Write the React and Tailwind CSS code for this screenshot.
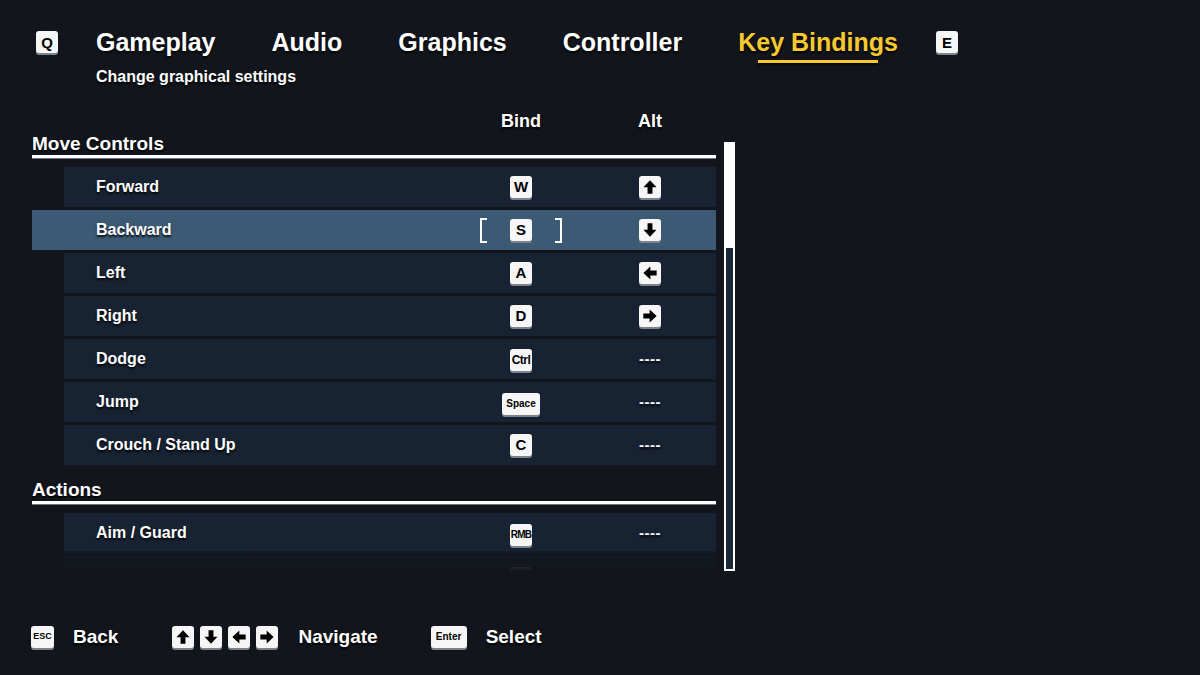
import React from 'react';

const TABS = ['Gameplay', 'Audio', 'Graphics', 'Controller', 'Key Bindings'];

const SECTIONS = [
  {
    title: 'Move Controls',
    rows: [
      { label: 'Forward', bind: 'W', alt: 'up' },
      { label: 'Backward', bind: 'S', alt: 'down', selected: true },
      { label: 'Left', bind: 'A', alt: 'left' },
      { label: 'Right', bind: 'D', alt: 'right' },
      { label: 'Dodge', bind: 'Ctrl', small: 'text-[12px] tracking-[-0.5px]' },
      { label: 'Jump', bind: 'Space', small: 'text-[10px] px-[4px]' },
      { label: 'Crouch / Stand Up', bind: 'C' },
    ],
  },
  {
    title: 'Actions',
    rows: [
      { label: 'Aim / Guard', bind: 'RMB', small: 'text-[10px] tracking-[-0.8px]' },
      { label: 'Attack', bind: 'LMB', small: 'text-[10px] tracking-[-0.8px]' },
    ],
  },
];

const ROT = { up: '', right: 'rotate-90', down: 'rotate-180', left: '-rotate-90' };

const shadow = '[text-shadow:0_2px_2px_rgba(0,0,0,0.85)]';

function Arrow({ dir }) {
  return (
    <svg width="14" height="14" viewBox="0 0 12 12" className={ROT[dir]}>
      <path d="M6 0.3 L11.6 6.3 H8.1 V11.7 H3.9 V6.3 H0.4 Z" fill="#000" />
    </svg>
  );
}

function Key({ children, className = 'text-[15px]' }) {
  return (
    <span
      className={`inline-flex items-center justify-center h-[22px] min-w-[22px] rounded-[3px] bg-[#f6f6f6] text-black font-bold leading-none shadow-[0_2px_0_#7d838b] [text-shadow:none] ${className}`}
    >
      {children}
    </span>
  );
}

function Bracket({ right }) {
  return (
    <span
      className={`block w-[7px] h-[25px] border-white border-y-2 ${right ? 'border-r-2' : 'border-l-2'}`}
    />
  );
}

function Row({ row }) {
  return (
    <div
      className={`flex items-center h-[40px] ${
        row.selected ? 'bg-[#3d5a75] pl-16' : 'bg-[#172232] ml-8 pl-8'
      }`}
    >
      <span className={`flex-1 text-[16px] font-bold text-white ${shadow}`}>{row.label}</span>
      <div className="w-[100px] flex items-center justify-center">
        {row.selected && <Bracket />}
        <span className={row.selected ? 'mx-[23px]' : ''}>
          <Key className={row.small || 'text-[15px]'}>{row.bind}</Key>
        </span>
        {row.selected && <Bracket right />}
      </div>
      <div className="w-[39px]" />
      <div className="w-[80px] flex items-center justify-center">
        {row.alt ? (
          <Key>
            <Arrow dir={row.alt} />
          </Key>
        ) : (
          <span className={`text-[15px] font-bold text-white tracking-[0.5px] ${shadow}`}>----</span>
        )}
      </div>
      <div className="w-[26px]" />
    </div>
  );
}

export default function App() {
  return (
    <div
      className="w-[1200px] h-[675px] bg-[#12151b] text-white overflow-hidden flex flex-col"
      style={{ fontFamily: '"Liberation Sans", Arial, sans-serif' }}
    >
      {/* tabs */}
      <div className="flex items-center pt-[27px] pl-[36px] gap-[38px]">
        <Key className="text-[15px] pt-[1px]">Q</Key>
        <div className="flex items-center gap-[56px]">
          {TABS.map((t) => {
            const active = t === 'Key Bindings';
            return (
              <div key={t} className="relative">
                <span
                  className={`block text-[25px] leading-[30px] font-bold ${shadow} ${
                    active ? 'text-[#f8c92f]' : 'text-white'
                  }`}
                >
                  {t}
                </span>
                {active && (
                  <span className="absolute left-[20px] right-[20px] top-[33px] h-[3px] bg-[#f8c92f] shadow-[0_2px_2px_rgba(0,0,0,0.8)]" />
                )}
              </div>
            );
          })}
        </div>
        <Key className="text-[15px] pt-[1px]">E</Key>
      </div>
      <p className={`pl-[96px] mt-[10px] text-[16px] leading-[20px] font-bold ${shadow}`}>
        Change graphical settings
      </p>

      {/* column headers */}
      <div className="flex mt-[23px] pl-[32px] w-[716px] h-[22px] items-center">
        <div className="flex-1" />
        <span className={`w-[100px] text-center text-[18px] font-bold ${shadow}`}>Bind</span>
        <div className="w-[39px]" />
        <span className={`w-[80px] text-center text-[18px] font-bold ${shadow}`}>Alt</span>
        <div className="w-[26px]" />
      </div>

      <div className="flex pl-[32px] gap-[8px]">
        <div className="relative w-[684px] h-[439px] overflow-hidden">
          {SECTIONS.map((s, i) => (
            <div key={s.title} className={i > 0 ? 'mt-[13px]' : ''}>
              <h2 className={`text-[19px] leading-[23px] font-bold ${shadow}`}>{s.title}</h2>
              <div className="h-[3px] bg-white shadow-[0_1px_0_#6b7280]" />
              <div className="mt-[9px] flex flex-col gap-[3px]">
                {s.rows.map((r) => (
                  <Row key={r.label} row={r} />
                ))}
              </div>
            </div>
          ))}
          <div className="absolute left-0 right-0 bottom-0 h-[20px] bg-gradient-to-b from-[#12151b]/60 to-[#12151b]" />
        </div>

        {/* scrollbar */}
        <div className="mt-[10px] w-[11px] h-[429px] border-2 border-white bg-[#1a2738]">
          <div className="h-[104px] bg-white" />
        </div>
      </div>

      {/* footer hints */}
      <div className={`mt-auto mb-[24px] flex items-center pl-[31px] text-[19px] font-bold ${shadow}`}>
        <Key className="text-[9px] min-w-[23px]">ESC</Key>
        <span className="ml-[19px]">Back</span>
        <div className="ml-[54px] flex gap-[6px]">
          {['up', 'down', 'left', 'right'].map((d) => (
            <Key key={d}>
              <Arrow dir={d} />
            </Key>
          ))}
        </div>
        <span className="ml-[20px]">Navigate</span>
        <Key className="ml-[53px] text-[10px] min-w-[36px]">Enter</Key>
        <span className="ml-[19px]">Select</span>
      </div>
    </div>
  );
}
